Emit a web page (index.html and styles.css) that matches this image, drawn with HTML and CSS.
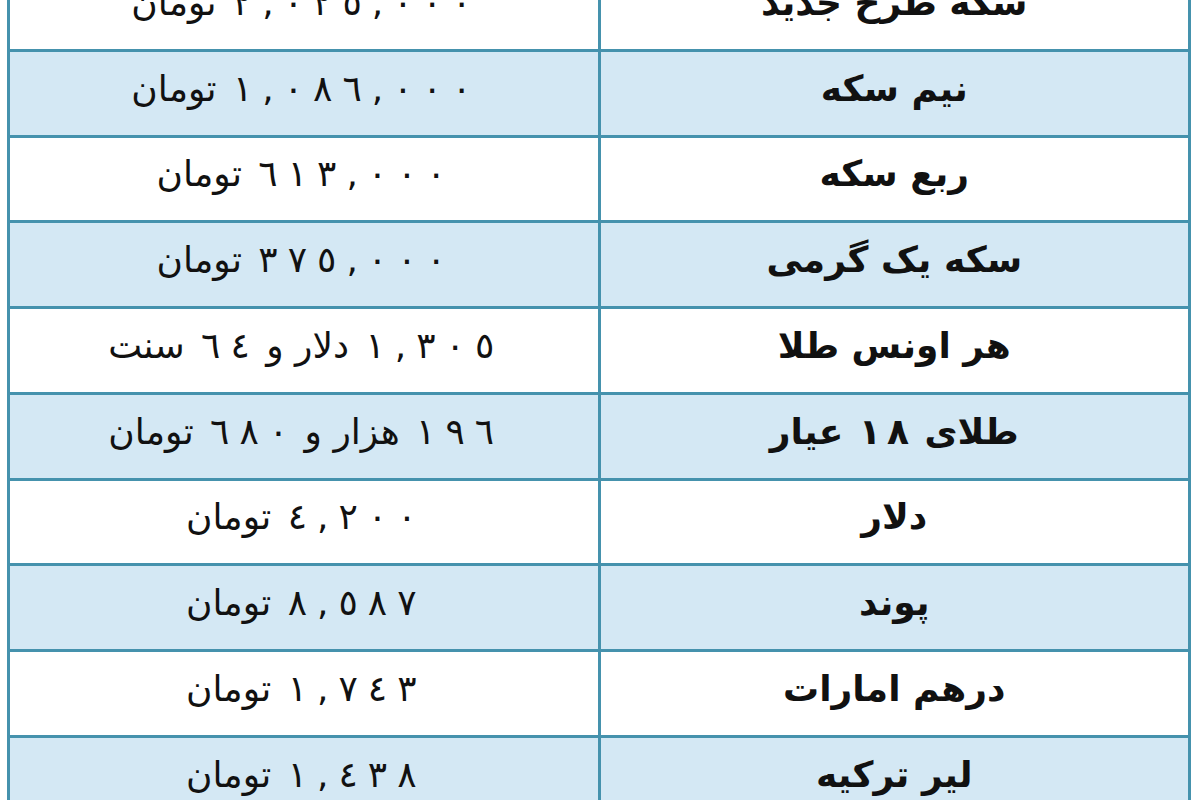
FILE: index.html
```html
<!DOCTYPE html>
<html lang="fa" dir="rtl">
<head>
<meta charset="utf-8">
<title>قیمت سکه و ارز</title>
<link rel="stylesheet" href="styles.css">
</head>
<body>
<table class="prices">
  <tbody>
    <tr class="row-white"><td class="name">سکه طرح جدید</td><td class="value"><span class="d">٢</span><span class="d">,</span><span class="d">٠</span><span class="d">٢</span><span class="d">٥</span><span class="d">,</span><span class="d">٠</span><span class="d">٠</span><span class="d">٠</span> تومان</td></tr>
    <tr class="row-blue"><td class="name">نیم سکه</td><td class="value"><span class="d">١</span><span class="d">,</span><span class="d">٠</span><span class="d">٨</span><span class="d">٦</span><span class="d">,</span><span class="d">٠</span><span class="d">٠</span><span class="d">٠</span> تومان</td></tr>
    <tr class="row-white"><td class="name">ربع سکه</td><td class="value"><span class="d">٦</span><span class="d">١</span><span class="d">٣</span><span class="d">,</span><span class="d">٠</span><span class="d">٠</span><span class="d">٠</span> تومان</td></tr>
    <tr class="row-blue"><td class="name">سکه یک گرمی</td><td class="value"><span class="d">٣</span><span class="d">٧</span><span class="d">٥</span><span class="d">,</span><span class="d">٠</span><span class="d">٠</span><span class="d">٠</span> تومان</td></tr>
    <tr class="row-white"><td class="name">هر اونس طلا</td><td class="value"><span class="d">١</span><span class="d">,</span><span class="d">٣</span><span class="d">٠</span><span class="d">٥</span> دلار و <span class="d">٦</span><span class="d">٤</span> سنت</td></tr>
    <tr class="row-blue"><td class="name">طلای <span class="d">١</span><span class="d">٨</span> عیار</td><td class="value"><span class="d">١</span><span class="d">٩</span><span class="d">٦</span> هزار و <span class="d">٦</span><span class="d">٨</span><span class="d">٠</span> تومان</td></tr>
    <tr class="row-white"><td class="name">دلار</td><td class="value"><span class="d">٤</span><span class="d">,</span><span class="d">٢</span><span class="d">٠</span><span class="d">٠</span> تومان</td></tr>
    <tr class="row-blue"><td class="name">پوند</td><td class="value"><span class="d">٨</span><span class="d">,</span><span class="d">٥</span><span class="d">٨</span><span class="d">٧</span> تومان</td></tr>
    <tr class="row-white"><td class="name">درهم امارات</td><td class="value"><span class="d">١</span><span class="d">,</span><span class="d">٧</span><span class="d">٤</span><span class="d">٣</span> تومان</td></tr>
    <tr class="row-blue"><td class="name">لیر ترکیه</td><td class="value"><span class="d">١</span><span class="d">,</span><span class="d">٤</span><span class="d">٣</span><span class="d">٨</span> تومان</td></tr>
  </tbody>
</table>
</body>
</html>
```
FILE: styles.css
```css
html, body {
  margin: 0;
  padding: 0;
  background: #ffffff;
  overflow: hidden;
}

body {
  padding: 0 9px 0 7px;
  font-family: "DejaVu Sans", "Liberation Sans", sans-serif;
  color: #111111;
}

.prices {
  width: 100%;
  margin-top: -37px;
  border-collapse: collapse;
  table-layout: fixed;
}

.prices td {
  border: 3px solid #4592ad;
  height: 73.75px;
  padding: 0 0 9px 0;
  text-align: center;
  vertical-align: middle;
  font-size: 36px;
  line-height: 1;
}

.prices .name {
  font-weight: bold;
}

.prices .value {
  font-weight: normal;
}

.d {
  margin: 0 5px;
}

.name .d {
  margin: 0 3px;
}

.row-white td {
  background: #ffffff;
}

.row-blue td {
  background: #d4e8f4;
}
```
